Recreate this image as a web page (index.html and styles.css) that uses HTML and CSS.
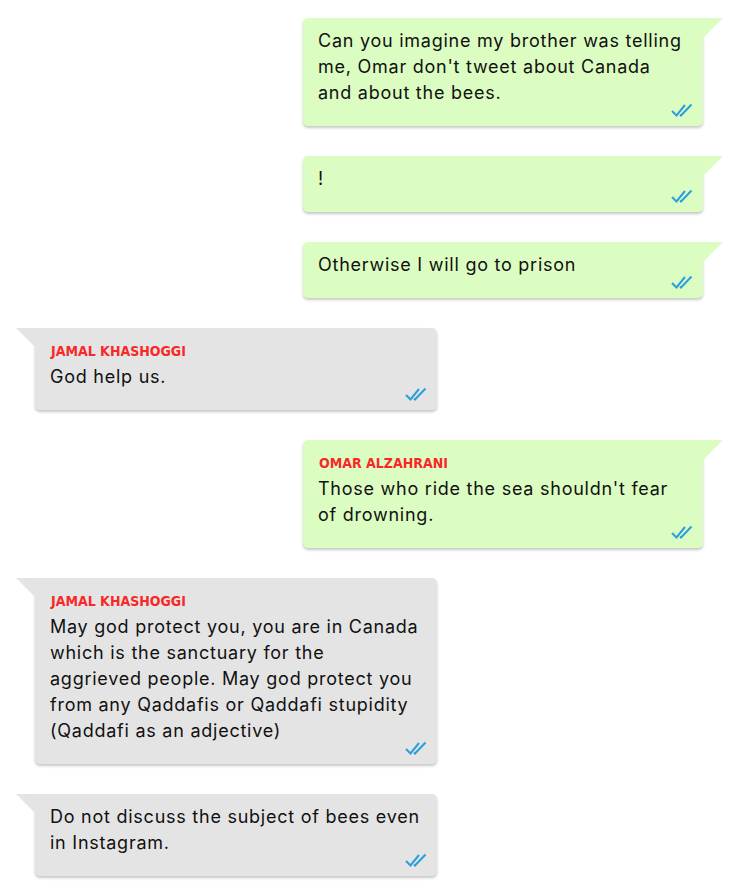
FILE: index.html
```html
<!DOCTYPE html>
<html>
<head>
<meta charset="utf-8">
<link rel="stylesheet" href="styles.css">
</head>
<body>
<div class="chat">
  <div class="bubble out">
    <div class="text">Can you imagine my brother was telling me, Omar don't tweet about Canada and about the bees.</div>
    <div class="meta"><svg class="ticks" viewBox="0 0 22 14" width="22" height="14"><path d="M1 8 L5.5 12.5 L14 2 M9 11.5 L10 12.5 L20.5 1.5"/></svg></div>
  </div>
  <div class="bubble out">
    <div class="text">!</div>
    <div class="meta"><svg class="ticks" viewBox="0 0 22 14" width="22" height="14"><path d="M1 8 L5.5 12.5 L14 2 M9 11.5 L10 12.5 L20.5 1.5"/></svg></div>
  </div>
  <div class="bubble out">
    <div class="text">Otherwise I will go to prison</div>
    <div class="meta"><svg class="ticks" viewBox="0 0 22 14" width="22" height="14"><path d="M1 8 L5.5 12.5 L14 2 M9 11.5 L10 12.5 L20.5 1.5"/></svg></div>
  </div>
  <div class="bubble in">
    <div class="name">JAMAL KHASHOGGI</div>
    <div class="text">God help us.</div>
    <div class="meta"><svg class="ticks" viewBox="0 0 22 14" width="22" height="14"><path d="M1 8 L5.5 12.5 L14 2 M9 11.5 L10 12.5 L20.5 1.5"/></svg></div>
  </div>
  <div class="bubble out">
    <div class="name">OMAR ALZAHRANI</div>
    <div class="text">Those who ride the sea shouldn't fear of drowning.</div>
    <div class="meta"><svg class="ticks" viewBox="0 0 22 14" width="22" height="14"><path d="M1 8 L5.5 12.5 L14 2 M9 11.5 L10 12.5 L20.5 1.5"/></svg></div>
  </div>
  <div class="bubble in">
    <div class="name">JAMAL KHASHOGGI</div>
    <div class="text">May god protect you, you are in Canada which is the sanctuary for the aggrieved people. May god protect you from any Qaddafis or Qaddafi stupidity (Qaddafi as an adjective)</div>
    <div class="meta"><svg class="ticks" viewBox="0 0 22 14" width="22" height="14"><path d="M1 8 L5.5 12.5 L14 2 M9 11.5 L10 12.5 L20.5 1.5"/></svg></div>
  </div>
  <div class="bubble in">
    <div class="text">Do not discuss the subject of bees even in Instagram.</div>
    <div class="meta"><svg class="ticks" viewBox="0 0 22 14" width="22" height="14"><path d="M1 8 L5.5 12.5 L14 2 M9 11.5 L10 12.5 L20.5 1.5"/></svg></div>
  </div>
</div>
</body>
</html>
```
FILE: styles.css
```css
html, body {
  margin: 0;
  padding: 0;
  background: #ffffff;
}
body {
  font-family: "Inter", "Liberation Sans", sans-serif;
  color: #111111;
}
.chat {
  display: flex;
  flex-direction: column;
  gap: 30px;
  padding: 18px 0 20px;
}
.bubble {
  position: relative;
  box-sizing: border-box;
  padding: 10px 10px 10px 15px;
  box-shadow: 0 2px 3px rgba(0, 0, 0, 0.22);
}
.bubble.out {
  align-self: flex-end;
  width: 400px;
  margin-right: 41px;
  background: #dcfdc1;
  border-radius: 0 0 5px 5px;
  border-top-left-radius: 5px;
}
.bubble.in {
  align-self: flex-start;
  width: 402px;
  margin-left: 35px;
  background: #e4e4e4;
  border-radius: 0 5px 5px 5px;
}
.bubble.out::before {
  content: "";
  position: absolute;
  top: 0;
  right: -20px;
  width: 20px;
  height: 20px;
  background: #dcfdc1;
  clip-path: polygon(0 0, 100% 0, 0 100%);
}
.bubble.in::before {
  content: "";
  position: absolute;
  top: 0;
  left: -19px;
  width: 19px;
  height: 19px;
  background: #e4e4e4;
  clip-path: polygon(0 0, 100% 0, 100% 100%);
}
.name {
  font-family: "DejaVu Sans", "Roboto", sans-serif;
  font-stretch: condensed;
  font-weight: 700;
  font-size: 14px;
  line-height: 26px;
  color: #f82828;
  padding-left: 1px;
}
.text {
  font-size: 18px;
  line-height: 26px;
  letter-spacing: 0.75px;
  padding-right: 5px;
}
.meta {
  height: 10px;
  display: flex;
  justify-content: flex-end;
  align-items: flex-end;
}
.ticks {
  display: block;
  margin-bottom: -1px;
  flex: none;
}
.ticks path {
  fill: none;
  stroke: #2a9fdc;
  stroke-width: 2;
}
```
